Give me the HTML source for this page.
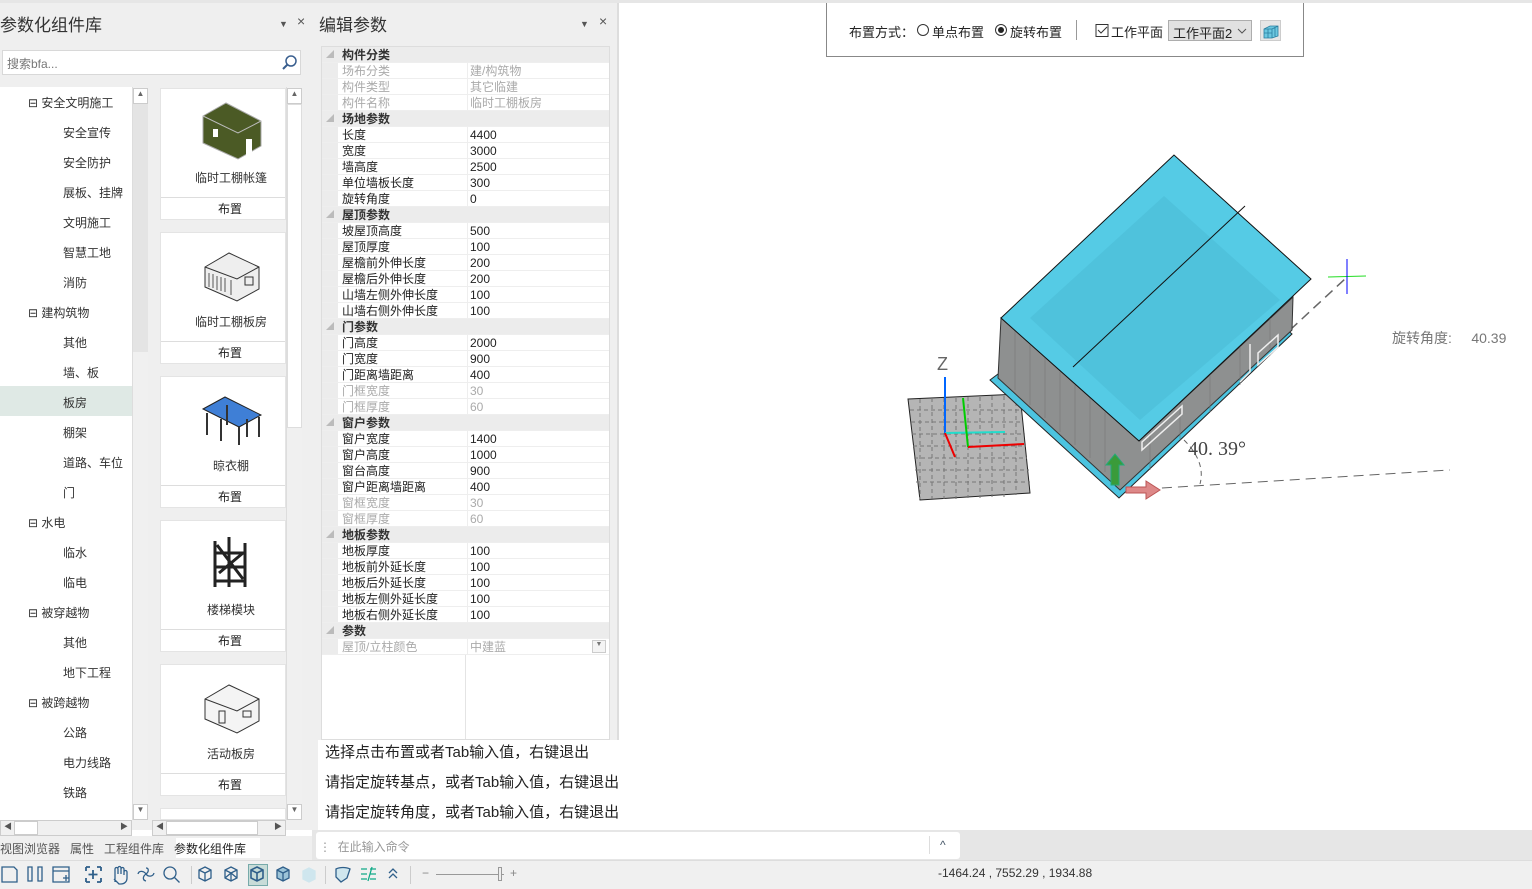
<!DOCTYPE html>
<html><head><meta charset="utf-8"><style>
*{box-sizing:border-box;margin:0;padding:0}
body{width:1532px;height:889px;overflow:hidden;background:#fff;font-family:"Liberation Sans","Noto Sans CJK SC",sans-serif;position:relative;color:#222}
.a{position:absolute}
.t{font-size:12px;white-space:nowrap}
.row{position:absolute;left:322px;width:287px;height:16px;font-size:12px;line-height:16px;border-bottom:1px solid #eee}
.row .k{position:absolute;left:20px}
.row .v{position:absolute;left:148px}
.row.h{background:#ececec;font-weight:bold;color:#333}
.row.g{color:#aaa}
.tree{position:absolute;font-size:12px;color:#333}
.card{position:absolute;left:160px;width:126px;height:132px;background:#fff;border:1px solid #e4e4e4}
.card .n{position:absolute;top:80px;left:14px;width:112px;text-align:center;font-size:12px;color:#333}
.card .b{position:absolute;top:108px;width:100%;height:24px;border-top:1px solid #ddd;text-align:center;padding-left:14px;font-size:12px;line-height:22px;color:#222}
</style></head><body>
<div class="a" style="left:0;top:0;width:1532px;height:3px;background:#e6e6e6"></div>
<div class="a" style="left:0;top:3px;width:312px;height:827px;background:#efefef"></div>
<div class="a t" style="left:0;top:11px;font-size:17px;color:#333">参数化组件库</div>
<div class="a" style="left:279px;top:19px;font-size:9px;color:#555">▼</div>
<div class="a" style="left:297px;top:13px;font-size:14px;color:#555">×</div>
<div class="a" style="left:2px;top:50px;width:299px;height:25px;background:#fff;border:1px solid #d8d8d8"></div>
<div class="a t" style="left:7px;top:55px;color:#777">搜索bfa...</div>
<svg class="a" style="left:281px;top:54px" width="18" height="18"><circle cx="10" cy="7" r="5" fill="none" stroke="#3a5f8f" stroke-width="1.5"/><line x1="6.5" y1="10.5" x2="2" y2="15" stroke="#3a5f8f" stroke-width="2"/></svg>
<div class="a" style="left:0;top:87px;width:132px;height:733px;background:#fff"></div>
<div class="a" style="left:0;top:386px;width:132px;height:30px;background:#dfe9e5"></div>
<div class="a" style="left:132px;top:87px;width:16px;height:733px;background:#f0f0f0;border-left:1px solid #ddd"></div>
<div class="a" style="left:133px;top:88px;width:15px;height:16px;background:#fff;border:1px solid #ccc;font-size:8px;text-align:center;color:#666">▲</div>
<div class="a" style="left:133px;top:104px;width:15px;height:248px;background:#e4e4e4"></div>
<div class="a" style="left:133px;top:804px;width:15px;height:16px;background:#fff;border:1px solid #ccc;font-size:8px;text-align:center;color:#666">▼</div>
<div class="tree" style="left:28px;top:94px">⊟ 安全文明施工</div>
<div class="tree" style="left:63px;top:124px">安全宣传</div>
<div class="tree" style="left:63px;top:154px">安全防护</div>
<div class="tree" style="left:63px;top:184px">展板、挂牌</div>
<div class="tree" style="left:63px;top:214px">文明施工</div>
<div class="tree" style="left:63px;top:244px">智慧工地</div>
<div class="tree" style="left:63px;top:274px">消防</div>
<div class="tree" style="left:28px;top:304px">⊟ 建构筑物</div>
<div class="tree" style="left:63px;top:334px">其他</div>
<div class="tree" style="left:63px;top:364px">墙、板</div>
<div class="tree" style="left:63px;top:394px">板房</div>
<div class="tree" style="left:63px;top:424px">棚架</div>
<div class="tree" style="left:63px;top:454px">道路、车位</div>
<div class="tree" style="left:63px;top:484px">门</div>
<div class="tree" style="left:28px;top:514px">⊟ 水电</div>
<div class="tree" style="left:63px;top:544px">临水</div>
<div class="tree" style="left:63px;top:574px">临电</div>
<div class="tree" style="left:28px;top:604px">⊟ 被穿越物</div>
<div class="tree" style="left:63px;top:634px">其他</div>
<div class="tree" style="left:63px;top:664px">地下工程</div>
<div class="tree" style="left:28px;top:694px">⊟ 被跨越物</div>
<div class="tree" style="left:63px;top:724px">公路</div>
<div class="tree" style="left:63px;top:754px">电力线路</div>
<div class="tree" style="left:63px;top:784px">铁路</div>
<div class="a" style="left:0;top:820px;width:132px;height:16px;background:#f0f0f0;border:1px solid #ccc"></div>
<div class="a" style="left:14px;top:821px;width:24px;height:14px;background:#fff;border:1px solid #ccc"></div>
<div class="a" style="left:4px;top:821px;font-size:8px;color:#555">◀</div>
<div class="a" style="left:120px;top:821px;font-size:8px;color:#555">▶</div>
<div class="a" style="left:286px;top:87px;width:16px;height:733px;background:#f0f0f0;border-left:1px solid #ddd"></div>
<div class="a" style="left:287px;top:88px;width:15px;height:16px;background:#fff;border:1px solid #ccc;font-size:8px;text-align:center;color:#666">▲</div>
<div class="a" style="left:287px;top:104px;width:15px;height:324px;background:#fff;border:1px solid #ddd"></div>
<div class="a" style="left:287px;top:804px;width:15px;height:16px;background:#fff;border:1px solid #ccc;font-size:8px;text-align:center;color:#666">▼</div>
<div class="card" style="top:88px"><svg class="a" style="left:40px;top:12px" width="62" height="60"><polygon points="2,15 25,2 60,20 60,45 37,58 2,42" fill="#4b5a25" stroke="#aaa"/><polyline points="2,15 37,32 60,20 M37,32 37,58" fill="none" stroke="#bbb"/><rect x="12" y="28" width="5" height="8" fill="#fff"/><path d="M45 55 V38 h6 v14" fill="#fff"/></svg><div class="n">临时工棚帐篷</div><div class="b">布置</div></div>
<div class="card" style="top:232px"><svg class="a" style="left:40px;top:14px" width="62" height="56"><polygon points="4,20 28,6 58,20 58,42 36,54 4,40" fill="#eee" stroke="#333"/><polyline points="4,20 36,32 58,20 M36,32 36,54" fill="none" stroke="#333"/><path d="M8 26v14M12 27v14M16 29v14M20 30v14M24 31v14M30 33v15" stroke="#555"/><rect x="44" y="30" width="8" height="8" fill="none" stroke="#333"/></svg><div class="n">临时工棚板房</div><div class="b">布置</div></div>
<div class="card" style="top:376px"><svg class="a" style="left:40px;top:14px" width="62" height="56"><polygon points="2,18 24,6 60,24 38,36" fill="#3f7fd6" stroke="#222"/><path d="M6 22v22M20 28v22M38 36v18M58 26v20M26 14v20M46 28v18" stroke="#333" stroke-width="2"/></svg><div class="n">晾衣棚</div><div class="b">布置</div></div>
<div class="card" style="top:520px"><svg class="a" style="left:46px;top:10px" width="50" height="60"><path d="M8 10v46M22 6v50M38 12v44M8 22h30M8 36h30M8 50h30M10 14l26 34M12 42l24-20" stroke="#222" stroke-width="3" fill="none"/></svg><div class="n">楼梯模块</div><div class="b">布置</div></div>
<div class="card" style="top:664px"><svg class="a" style="left:40px;top:14px" width="62" height="56"><polygon points="4,20 28,6 58,20 58,42 36,54 4,40" fill="#f4f4f4" stroke="#333"/><polyline points="4,20 36,32 58,20 M36,32 36,54" fill="none" stroke="#333"/><rect x="18" y="32" width="6" height="12" fill="none" stroke="#333"/><rect x="42" y="32" width="8" height="6" fill="none" stroke="#333"/></svg><div class="n">活动板房</div><div class="b">布置</div></div>
<div class="card" style="top:808px;height:12px"></div>
<div class="a" style="left:152px;top:820px;width:134px;height:16px;background:#f0f0f0;border:1px solid #ccc"></div>
<div class="a" style="left:166px;top:821px;width:92px;height:14px;background:#fff;border:1px solid #ccc"></div>
<div class="a" style="left:156px;top:821px;font-size:8px;color:#555">◀</div>
<div class="a" style="left:274px;top:821px;font-size:8px;color:#555">▶</div>
<div class="a" style="left:0;top:836px;width:312px;height:24px;background:#efefef"></div>
<div class="a" style="left:176px;top:838px;width:84px;height:20px;background:#fff"></div>
<div class="a t" style="left:0;top:840px;color:#555">视图浏览器 &nbsp;&nbsp;属性 &nbsp;&nbsp;工程组件库 &nbsp;&nbsp;<span style="color:#222">参数化组件库</span></div>
<div class="a" style="left:312px;top:3px;width:306px;height:827px;background:#efefef"></div>
<div class="a t" style="left:319px;top:11px;font-size:17px;color:#333">编辑参数</div>
<div class="a" style="left:580px;top:19px;font-size:9px;color:#555">▼</div>
<div class="a" style="left:599px;top:13px;font-size:14px;color:#555">×</div>
<div class="a" style="left:321px;top:46px;width:289px;height:694px;background:#fff;border:1px solid #ddd"></div>
<div class="a" style="left:322px;top:47px;width:16px;height:608px;background:#ececec"></div>
<div class="a" style="left:465px;top:655px;width:1px;height:84px;background:#e4e4e4"></div>
<div id="rows"></div>
<div class="a" style="left:318px;top:740px;width:300px;height:90px;background:#fff"></div>
<div class="a" style="left:617px;top:3px;width:2px;height:737px;background:#ddd"></div>
<div class="a" style="left:325px;top:738px;font-size:15px;color:#222;line-height:30px;white-space:nowrap;z-index:5">选择点击布置或者Tab输入值，右键退出<br>请指定旋转基点，或者Tab输入值，右键退出<br>请指定旋转角度，或者Tab输入值，右键退出</div>
<div class="a" style="left:312px;top:830px;width:1220px;height:31px;background:#e6e6e6"></div>
<div class="a" style="left:316px;top:832px;width:644px;height:27px;background:#fff;border-radius:3px"></div>
<div class="a t" style="left:319px;top:838px;color:#999">⋮ &nbsp;在此输入命令</div>
<div class="a" style="left:929px;top:836px;width:1px;height:18px;background:#ddd"></div>
<div class="a t" style="left:940px;top:838px;color:#456">^</div>
<div class="a" style="left:0;top:860px;width:1532px;height:29px;background:#f0f0f0;border-top:1px solid #ddd"></div>
<div class="a" style="left:248px;top:864px;width:20px;height:22px;background:#c8dcd8;border:1px solid #7aa"></div>
<svg class="a" style="left:0;top:862px" width="420" height="27" fill="none" stroke="#2f5f8a" stroke-width="1.3">
<path d="M2 5h12l3 3v12H2z"/>
<path d="M28 5h4v14h-4zM38 5h4v14h-4zM28 5v14"/>
<path d="M53 5h16v15H53zM53 9h16M63 16h6M66 13v6"/>
<path d="M86 5v4M86 5h4M101 5h-4M101 5v4M86 20v-4M86 20h4M101 20h-4M101 20v-4M93 8v9M88.5 12.5h9" stroke-width="1.8"/>
<path d="M115 20v-9m0 0v-4a1.5 1.5 0 013 0v5m0-6a1.5 1.5 0 013 0v6m0-5a1.5 1.5 0 013 0v6m0-3a1.5 1.5 0 013 0v6c0 4-3 6-6 6h-2l-5-5"/>
<path d="M146 6c3 0 3 4 0 6s-4 6 0 7M138 12c1-4 6-3 8 0s7 3 8-1"/>
<circle cx="170" cy="11" r="6"/><path d="M174.5 15.5l5 5"/>
<path d="M205 5l6 3v8l-6 3-6-3V8zM199 8l6 3 6-3M205 11v8"/>
<path d="M231 5l6 3v8l-6 3-6-3V8zM225 8l6 3 6-3M231 11v8M225 16l6-5 6 5"/>
<path d="M257 5l6 3v8l-6 3-6-3V8zM251 8l6 3 6-3M257 11v8" stroke-width="1.6"/>
<path d="M283 5l6 3v8l-6 3-6-3V8z" fill="#9cc4d8"/><path d="M277 8l6 3 6-3M283 11v8"/>
<path d="M309 6l6 3v8l-6 3-6-3V9z" fill="#cfe6ee" stroke="#cfe6ee"/>
<path d="M336 7c4-2 10-2 14 0l-3 9-6 4-5-5z" fill="#cfe6ee"/>
<path d="M361 7h6M361 12h6M361 17h6M370 7h6M370 12h6M370 17h6M372 5l-4 14" stroke="#1a8"/>
<path d="M389 11l4-4 4 4M389 16l4-4 4 4"/>
</svg>
<div class="a" style="left:191px;top:866px;width:1px;height:18px;background:#ccc"></div>
<div class="a" style="left:325px;top:866px;width:1px;height:18px;background:#ccc"></div>
<div class="a" style="left:410px;top:866px;width:1px;height:18px;background:#ccc"></div>
<div class="a t" style="left:422px;top:866px;color:#888">−</div>
<div class="a" style="left:436px;top:874px;width:68px;height:1px;background:#999"></div>
<div class="a" style="left:498px;top:867px;width:4px;height:14px;background:#eee;border:1px solid #999"></div>
<div class="a t" style="left:510px;top:866px;color:#888">+</div>
<div class="a t" style="left:938px;top:866px;color:#333">-1464.24 , 7552.29 , 1934.88</div>
<div class="a" style="left:826px;top:3px;width:478px;height:54px;background:#fff;border:1px solid #888;border-top:none"></div>
<div class="a t" style="left:849px;top:22px;font-size:13px;color:#222">布置方式：</div>
<svg class="a" style="left:916px;top:23px" width="200" height="16"><circle cx="7" cy="7" r="5.5" fill="#fff" stroke="#333"/><circle cx="85" cy="7" r="5.5" fill="#fff" stroke="#333"/><circle cx="85" cy="7" r="3" fill="#222"/><rect x="180" y="1.5" width="12" height="12" fill="#fff" stroke="#333"/><path d="M182 7l3 3 6-6" fill="none" stroke="#333"/></svg>
<div class="a t" style="left:932px;top:22px;font-size:13px;color:#222">单点布置</div>
<div class="a t" style="left:1010px;top:22px;font-size:13px;color:#222">旋转布置</div>
<div class="a" style="left:1076px;top:20px;width:1px;height:20px;background:#999"></div>
<div class="a t" style="left:1111px;top:22px;font-size:13px;color:#222">工作平面</div>
<div class="a" style="left:1168px;top:20px;width:84px;height:21px;background:#e1e1e1;border:1px solid #adadad;font-size:13px;padding:2px 4px;white-space:nowrap">工作平面2</div>
<svg class="a" style="left:1237px;top:27px" width="10" height="8"><path d="M1 2l4 4 4-4" fill="none" stroke="#555"/></svg>
<div class="a" style="left:1260px;top:20px;width:21px;height:21px;background:#e6e6e6;border:1px solid #ccc"><svg width="19" height="19"><path d="M3 8l6-3h8v10l-6 2H3zM3 8h8v9M11 8l6-3M7 8v9M3 12h8M14 6v10" fill="#6cc8e0" stroke="#2a7fa0" stroke-width="0.8"/></svg></div>
<div class="a t" style="left:1392px;top:328px;font-size:14px;color:#777">旋转角度: &nbsp;&nbsp;&nbsp;&nbsp;40.39</div>
<svg class="a" style="left:0;top:0" width="1532" height="889">
<line x1="1130" y1="490" x2="1450" y2="470" stroke="#666" stroke-dasharray="10,6"/>
<line x1="1290" y1="330" x2="1346" y2="278" stroke="#666" stroke-width="1.5" stroke-dasharray="10,6"/>
<line x1="1328" y1="277" x2="1366" y2="276" stroke="#2d2"/><line x1="1347" y1="259" x2="1347" y2="294" stroke="#00f"/>
<path d="M1184 440 Q1206 462 1200 484" fill="none" stroke="#666" stroke-dasharray="5,4"/>
<text x="1188" y="455" font-size="20" fill="#444" font-family="Liberation Serif,serif">40. 39°</text>
<polygon points="908,399 1020,394 1030,493 920,500" fill="#b5b5b5" stroke="#222"/>
<g stroke="#777" stroke-dasharray="4,3"><path d="M910 410h112M911 422h112M912 434h113M913 446h113M914 458h113M915 470h114M916 482h114M920 399v100M932 398v101M944 398v101M956 398v101M968 397v101M980 397v101M992 396v101M1004 396v101M1016 395v100"/></g>
<line x1="945" y1="377" x2="945" y2="434" stroke="#06f" stroke-width="2"/>
<line x1="945" y1="433" x2="1005" y2="432" stroke="#2dc" stroke-width="2"/>
<line x1="963" y1="398" x2="968" y2="447" stroke="#0c0" stroke-width="2"/>
<line x1="968" y1="447" x2="1024" y2="444" stroke="#e00" stroke-width="2"/>
<line x1="945" y1="433" x2="955" y2="457" stroke="#e00" stroke-width="2"/>
<text x="937" y="370" font-size="18" fill="#666">Z</text>
<polygon points="990,380 1119,498 1292,334 1285,328 1120,488 998,374" fill="#4cc4e0" stroke="#222"/>
<polygon points="1001,318 998,378 1120,490 1292,330 1293,297 1139,441" fill="#8e9090" stroke="#333"/>
<g stroke="#777" opacity=".6"><path d="M1015 330v60M1030 345v60M1045 358v60M1060 372v60M1075 385v60M1090 398v60M1105 412v60M1150 430v40M1180 400v40M1210 372v40M1240 345v40M1270 318v30"/></g>
<path d="M1142 442l40-36v8l-40 36z M1240 382l10-10v-28M1258 365l20-18v-12l-20 18z" fill="none" stroke="#eee" stroke-width="1.5"/>
<polygon points="1001,318 1174,155 1311,279 1139,441" fill="#55cbe5" stroke="#111"/>
<polygon points="1030,318 1164,196 1280,300 1140,420" fill="#4bbcd6" opacity=".6"/>
<line x1="1245" y1="206" x2="1073" y2="367" stroke="#111"/>
<polygon points="1111,485 1111,465 1106,465 1115,454 1124,465 1119,465 1119,485" fill="#3a9b3a" stroke="#2a7"/>
<polygon points="1126,487 1146,487 1146,481 1160,490 1146,499 1146,493 1126,493" fill="#d88" stroke="#b55"/>
</svg>
<script>
var R=[["h","构件分类"],["g","场布分类","建/构筑物"],["g","构件类型","其它临建"],["g","构件名称","临时工棚板房"],["h","场地参数"],["","长度","4400"],["","宽度","3000"],["","墙高度","2500"],["","单位墙板长度","300"],["","旋转角度","0"],["h","屋顶参数"],["","坡屋顶高度","500"],["","屋顶厚度","100"],["","屋檐前外伸长度","200"],["","屋檐后外伸长度","200"],["","山墙左侧外伸长度","100"],["","山墙右侧外伸长度","100"],["h","门参数"],["","门高度","2000"],["","门宽度","900"],["","门距离墙距离","400"],["g","门框宽度","30"],["g","门框厚度","60"],["h","窗户参数"],["","窗户宽度","1400"],["","窗户高度","1000"],["","窗台高度","900"],["","窗户距离墙距离","400"],["g","窗框宽度","30"],["g","窗框厚度","60"],["h","地板参数"],["","地板厚度","100"],["","地板前外延长度","100"],["","地板后外延长度","100"],["","地板左侧外延长度","100"],["","地板右侧外延长度","100"],["h","参数"],["g","屋顶/立柱颜色","中建蓝"]];
var h="";R.forEach(function(r,i){var y=47+i*16;h+='<div class="row '+r[0]+'" style="top:'+y+'px">'+(r[0]=="h"?'<span style="position:absolute;left:4px;color:#bbb;font-size:8px">◢</span>':'')+'<span class="k">'+r[1]+'</span>'+(r[2]?'<span class="v">'+r[2]+'</span><span style="position:absolute;left:145px;top:0;width:1px;height:16px;background:#eee"></span>':'')+'</div>';});
h+='<div class="a" style="left:592px;top:640px;width:14px;height:13px;border:1px solid #ccc;background:#f4f4f4;font-size:7px;text-align:center;color:#777">▼</div>';
document.getElementById("rows").innerHTML=h;
</script>
</body></html>
